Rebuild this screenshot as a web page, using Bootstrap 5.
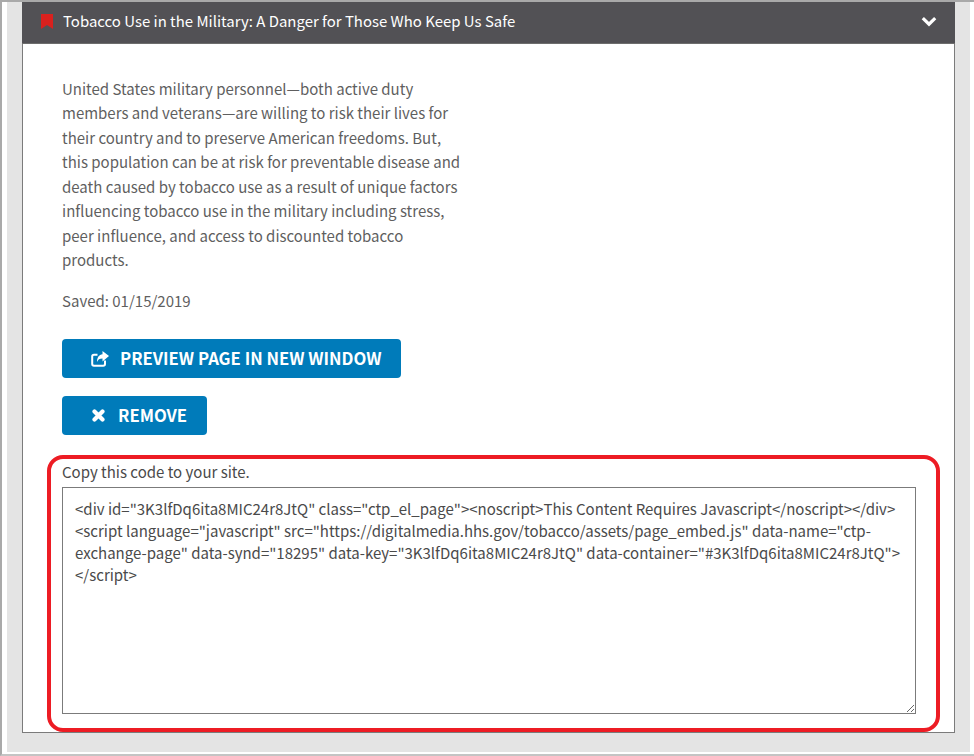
<!DOCTYPE html>
<html lang="en"><head><meta charset="utf-8"><title>Embed code</title>
<link href="https://cdn.jsdelivr.net/npm/bootstrap@5.3.0/dist/css/bootstrap.min.css" rel="stylesheet">
<style>
html,body{height:756px;overflow:hidden;background:#fff}
body{font-family:"Noto Sans CJK SC","Source Sans Pro","Liberation Sans",sans-serif;color:#5f5f5f;font-size:15px}
.shot-frame{width:974px;height:756px;border-top:2px solid #a9a9a9;border-left:2px solid #a9a9a9;border-bottom:2px solid #c4c4c4;padding:0 4px 2px 5px;background:#fff;position:relative}
.shot-bg{height:100%;background:#e4e4e4;padding:0 15px;width:963px}
.acc-panel{width:933px;height:731px;background:#fff;border:1px solid #7b7b7b;border-top:0}
.acc-head{height:42px;margin:0 -1px 0 -1px;background:#525155;color:#fff;padding:0 18px 3px 19px;font-size:14.95px;border-bottom:1px solid #6d6d6d}
.head-title{margin-left:10px}
.acc-body{padding:33px 39px 0}
.intro-copy{width:402px;line-height:24.43px;margin:0 0 16px}
.saved-line{line-height:24.5px;margin:0 0 26px}
.cta-btn{background:#007bba;color:#fff;border:0;border-radius:4px;font-weight:700;font-size:16.7px;height:39px;display:inline-flex;align-items:center;padding:0;line-height:1}
.cta-btn:hover{background:#007bba;color:#fff}
.cta-wide{width:339px;padding-left:29px;gap:11px;margin-bottom:18px}
.cta-short{width:145px;padding-left:30px;gap:13px}
.code-label{color:#4a4a4a;line-height:24px;margin:25px 0 3px}
.code-area{display:block;width:854px;height:227px;border:1px solid #7b7b7b;border-radius:0;padding:10px 12px;color:#4a4a4a;font:inherit;line-height:22px;font-size:15px;background:#fff;outline:0}
.red-mark{position:absolute;left:45px;top:453px;width:893px;height:277px;border:4px solid #ed1c24;border-radius:16px;pointer-events:none}
</style></head>
<body>
<div class="shot-frame">
 <div class="shot-bg">
  <div class="acc-panel">
   <div class="acc-head d-flex align-items-center">
    <svg width="12" height="15" viewBox="0 0 12 15" class="flex-shrink-0" aria-hidden="true"><path d="M0 0H12V15L6 11 0 15Z" fill="#d9211e"/></svg>
    <span class="flex-grow-1 head-title">Tobacco Use in the Military: A Danger for Those Who Keep Us Safe</span>
    <svg width="16" height="11" viewBox="0 0 16 11" class="flex-shrink-0" aria-hidden="true"><path d="M1.800 2.200 8 8.200 14.200 2.200" fill="none" stroke="#fff" stroke-width="3.200"/></svg>
   </div>
   <div class="acc-body">
    <p class="intro-copy">United States military personnel—both active duty members and veterans—are willing to risk their lives for their country and to preserve American freedoms. But, this population can be at risk for preventable disease and death caused by tobacco use as a result of unique factors influencing tobacco use in the military including stress, peer influence, and access to discounted tobacco products.</p>
    <p class="saved-line">Saved: 01/15/2019</p>
    <div><button type="button" class="btn cta-btn cta-wide">
     <svg width="18" height="16" viewBox="0 0 18 16" aria-hidden="true"><path d="M14 9.500V13a1.800 1.800 0 0 1-1.800 1.800H3A1.800 1.800 0 0 1 1.200 13V5.500A1.800 1.800 0 0 1 3 3.700h3.500" fill="none" stroke="#fff" stroke-width="2"/><path d="M11.500 0 18 5 11.500 10.500V7.500C8.500 7.500 7 8.500 6 11 6 6.500 8 3.800 11.500 3.300Z" fill="#fff"/></svg>
     <span>PREVIEW PAGE IN NEW WINDOW</span></button></div>
    <div><button type="button" class="btn cta-btn cta-short">
     <svg width="13" height="13" viewBox="0 0 13 13" aria-hidden="true"><path d="M2.500 2.500 10.500 10.500M10.500 2.500 2.500 10.500" stroke="#fff" stroke-width="4.200" stroke-linecap="round"/></svg>
     <span>REMOVE</span></button></div>
    <div class="code-label">Copy this code to your site.</div>
    <textarea class="code-area" readonly spellcheck="false">&lt;div id="3K3lfDq6ita8MIC24r8JtQ" class="ctp_el_page"&gt;&lt;noscript&gt;This Content Requires Javascript&lt;/noscript&gt;&lt;/div&gt;
&lt;script language="javascript" src="https://digitalmedia.hhs.gov/tobacco/assets/page_embed.js" data-name="ctp-exchange-page" data-synd="18295" data-key="3K3lfDq6ita8MIC24r8JtQ" data-container="#3K3lfDq6ita8MIC24r8JtQ"&gt;&lt;/script&gt;</textarea>
   </div>
  </div>
 </div>
 <div class="red-mark"></div>
</div>
<script src="https://cdn.jsdelivr.net/npm/bootstrap@5.3.0/dist/js/bootstrap.bundle.min.js"></script>
</body></html>
